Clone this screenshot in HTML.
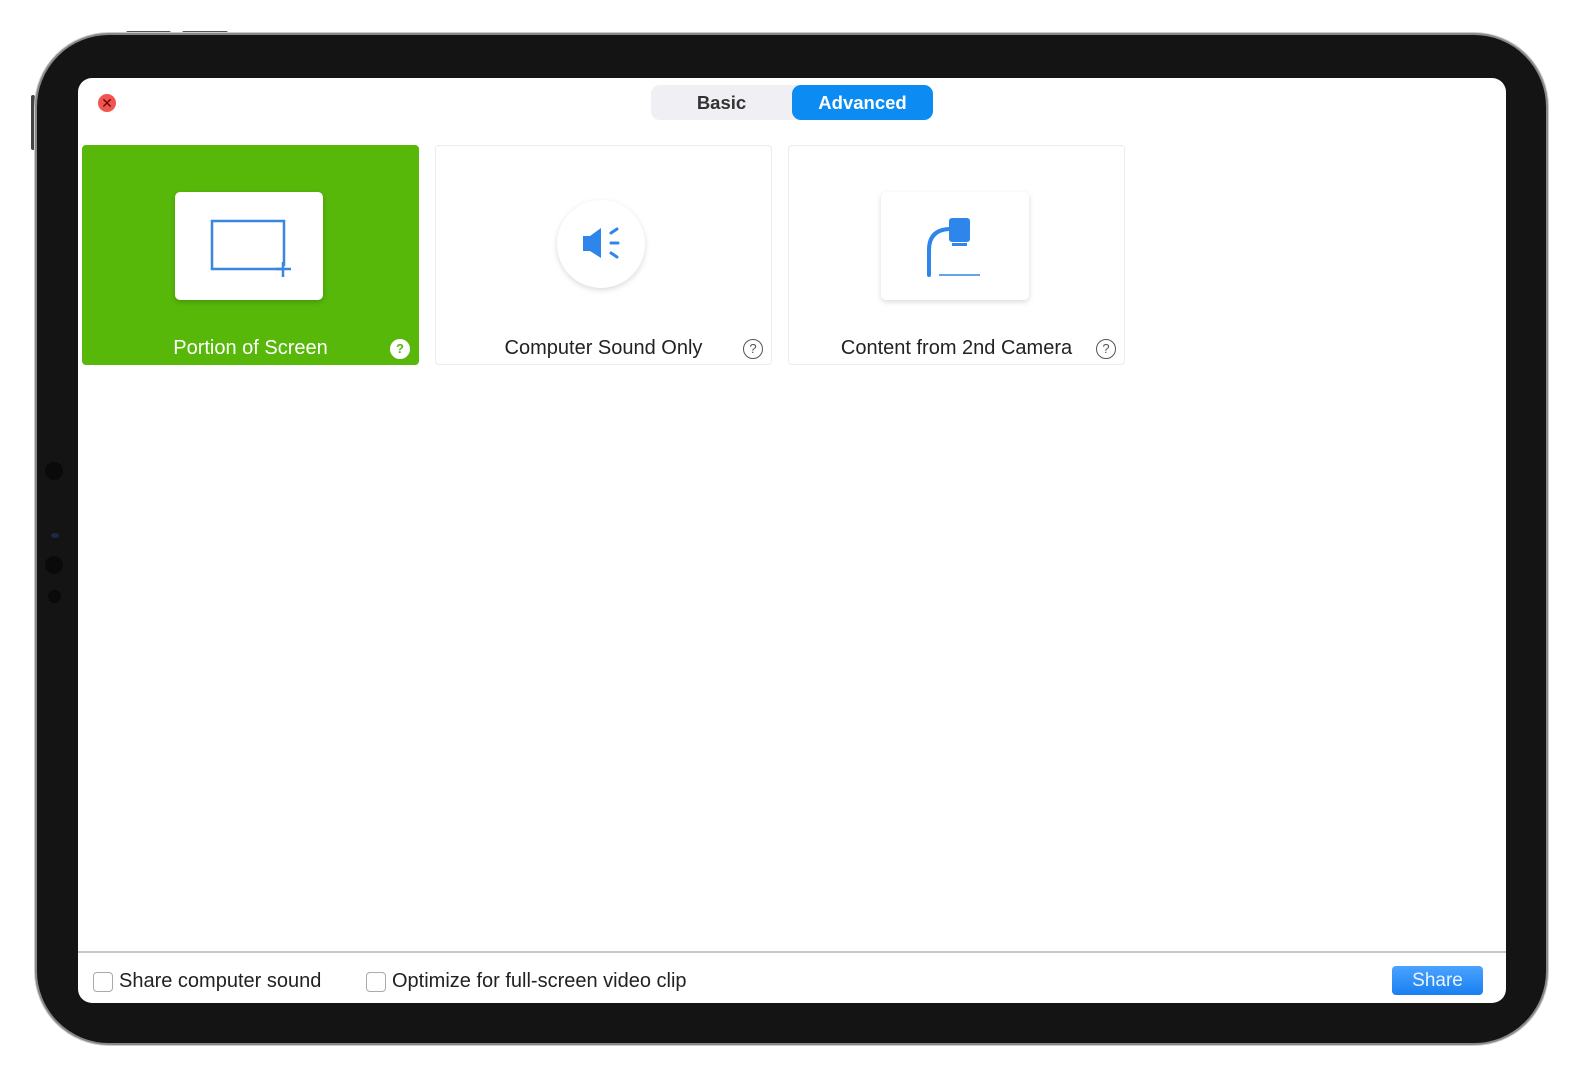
<!DOCTYPE html>
<html><head><meta charset="utf-8"><style>
*{box-sizing:border-box;margin:0;padding:0}
html,body{width:1583px;height:1080px;overflow:hidden}
body{background:#fff;position:relative;font-family:"Liberation Sans",sans-serif}
.btnt{position:absolute;top:31px;height:5px;background:#555;border-radius:2px}
.dev{position:absolute;left:35px;top:33px;width:1513px;height:1012px;border-radius:74px;background:#141414;border:2px solid #888;box-shadow:0 0 0 1px #ccc}
.side{position:absolute;left:31px;top:95px;width:4px;height:55px;background:#444;border-radius:2px}
.screen{position:absolute;left:78px;top:78px;width:1428px;height:925px;border-radius:14px;background:#fff;overflow:hidden}
.dot{position:absolute;border-radius:50%;background:#0a0a0a}
.close{position:absolute;left:20px;top:16px;width:18px;height:18px;border-radius:50%;background:#f05650;color:#600;font-size:14px;line-height:18px;text-align:center}
.tabs{position:absolute;left:573px;top:7px;width:282px;height:35px;background:#f0f0f4;border-radius:9px}
.tab{position:absolute;top:0;height:35px;line-height:35px;text-align:center;font-weight:bold;font-size:18.5px}
.card{position:absolute;top:67px;width:337px;height:220px;border:1px solid #ececec;border-radius:4px;background:#fff}
.card.sel{background:#57b80a;border-color:#57b80a}
.lbl{position:absolute;left:0;right:0;top:191px;text-align:center;font-size:20px;color:#222}
.q{position:absolute;right:8px;top:193px;width:20px;height:20px;border-radius:50%;border:1.5px solid #555;font-size:13px;line-height:17px;text-align:center;color:#555}
.tile{position:absolute;background:#fff;border-radius:5px;box-shadow:0 2px 6px rgba(0,0,0,.15)}
.cb{position:absolute;top:894px;width:20px;height:20px;border:1px solid #aaa;border-radius:4px}
.ct{position:absolute;top:892px;font-size:20px;color:#222}
</style></head><body>
<div class="btnt" style="left:126px;width:45px"></div>
<div class="btnt" style="left:182px;width:46px"></div>
<div class="side"></div>
<div class="dev"></div>
<div class="dot" style="left:45px;top:462px;width:18px;height:18px"></div>
<div class="dot" style="left:45px;top:556px;width:18px;height:18px"></div>
<div class="dot" style="left:48px;top:590px;width:13px;height:13px"></div>
<div class="dot" style="left:51px;top:533px;width:8px;height:5px;background:#1c2a4a"></div>
<div class="screen">
 <div class="close">✕</div>
 <div class="tabs">
  <div class="tab" style="left:0;width:141px;color:#333">Basic</div>
  <div class="tab" style="left:141px;width:141px;background:#0c8cf2;color:#fff;border-radius:9px">Advanced</div>
 </div>
 <div class="card sel" style="left:4px">
  <div class="tile" style="left:92px;top:46px;width:148px;height:108px;box-shadow:0 2px 6px rgba(0,0,0,.2)">
   <svg width="148" height="108"><path d="M109 77H37V29H109V74" fill="none" stroke="#3a86e0" stroke-width="2.5"/><path d="M101 77H116M108 70V85" stroke="#3a86e0" stroke-width="2.5"/></svg>
  </div>
  <div class="lbl" style="color:#fff">Portion of Screen</div>
  <div class="q" style="background:#fff;border-color:#fff;color:#57b80a;font-weight:bold">?</div>
 </div>
 <div class="card" style="left:357px">
  <div class="tile" style="left:121px;top:54px;width:88px;height:88px;border-radius:50%">
   <svg width="88" height="88"><path d="M26 36H33L44 28V58L33 51H26Z" fill="#2f86ea"/><path d="M54 33L60 29M54 43H61M54 53L60 57" stroke="#2f86ea" stroke-width="3" stroke-linecap="round"/></svg>
  </div>
  <div class="lbl">Computer Sound Only</div>
  <div class="q">?</div>
 </div>
 <div class="card" style="left:710px">
  <div class="tile" style="left:92px;top:46px;width:148px;height:108px">
   <svg width="148" height="108"><rect x="68" y="26" width="21" height="24" rx="3" fill="#2f86ea"/><rect x="71" y="51" width="15" height="3" fill="#2f86ea"/><path d="M68 37Q48 38 48 58V83" fill="none" stroke="#2f86ea" stroke-width="4" stroke-linecap="round"/><path d="M58 83H99" stroke="#2f86ea" stroke-width="1.5"/></svg>
  </div>
  <div class="lbl">Content from 2nd Camera</div>
  <div class="q">?</div>
 </div>
 <div style="position:absolute;left:0;right:0;top:873px;height:2px;background:#c8c8c8"></div>
 <div class="cb" style="left:15px"></div><div class="ct" style="left:41px">Share computer sound</div>
 <div class="cb" style="left:288px"></div><div class="ct" style="left:314px">Optimize for full-screen video clip</div>
 <div style="position:absolute;left:1314px;top:888px;width:91px;height:29px;border-radius:4px;background:linear-gradient(#4aa3ff,#1a7ff0);color:#eaf4ff;font-size:19px;line-height:29px;text-align:center">Share</div>
</div>
</body></html>
